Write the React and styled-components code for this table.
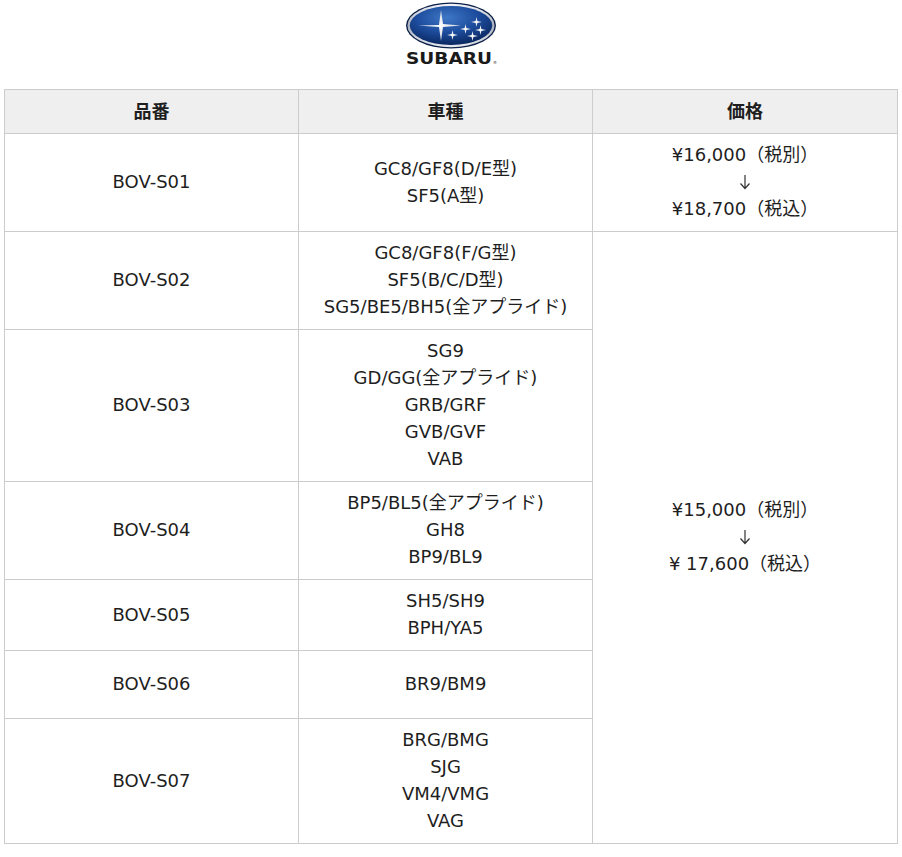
import styled, { createGlobalStyle } from 'styled-components';

const GlobalStyle = createGlobalStyle`
  body {
    margin: 0;
    background: #fff;
    font-family: "DejaVu Sans", "Noto Sans CJK JP", sans-serif;
    color: #1e1e1e;
  }
`;

const Page = styled.div`
  width: 902px;
  padding: 0 5px 0 4px;
  box-sizing: border-box;
`;

const LogoBar = styled.div`
  height: 89px;
  display: flex;
  justify-content: center;
  align-items: flex-start;
`;

const Table = styled.table`
  width: 893px;
  border-collapse: collapse;
  table-layout: fixed;
  font-size: 18px;
  line-height: 27px;
`;

const Col = styled.col`
  width: ${(p) => p.w}px;
`;

const Th = styled.th`
  background: #efefef;
  border: 1px solid #cccccc;
  height: 43px;
  padding: 0 8px;
  font-weight: bold;
  text-align: center;
  vertical-align: middle;
`;

const Row = styled.tr`
  height: ${(p) => p.h}px;
`;

const Td = styled.td`
  border: 1px solid #cccccc;
  padding: 7px 8px 9px;
  text-align: center;
  vertical-align: middle;
`;

const Line = styled.div`
  white-space: nowrap;
`;

const Arrow = styled.div`
  height: 27px;
  display: flex;
  justify-content: center;
  align-items: center;
`;

const DownArrow = () => (
  <Arrow>
    <svg width="12" height="16" viewBox="0 0 12 16">
      <path d="M6 1 V14 M1.5 9.5 L6 14.5 L10.5 9.5" fill="none" stroke="#333" strokeWidth="1.2" />
    </svg>
  </Arrow>
);

const star = (x, y, a, b, t) =>
  `M${x} ${y - a} L${x + t} ${y - t} L${x + b} ${y} L${x + t} ${y + t} L${x} ${y + a} L${x - t} ${y + t} L${x - b} ${y} L${x - t} ${y - t} Z`;

const SubaruLogo = () => (
  <svg width="100" height="70" viewBox="0 0 100 70">
    <defs>
      <radialGradient id="blue" cx="45%" cy="30%" r="70%">
        <stop offset="0" stopColor="#3f78c6" />
        <stop offset="0.55" stopColor="#1c4b9c" />
        <stop offset="1" stopColor="#0b2860" />
      </radialGradient>
      <linearGradient id="rim" x1="0" y1="0" x2="0" y2="1">
        <stop offset="0" stopColor="#f2f4f8" />
        <stop offset="0.5" stopColor="#a9b1bf" />
        <stop offset="1" stopColor="#e6e9ef" />
      </linearGradient>
      <radialGradient id="star" cx="50%" cy="50%" r="50%">
        <stop offset="0" stopColor="#ffffff" />
        <stop offset="1" stopColor="#d0d4dc" />
      </radialGradient>
    </defs>
    <ellipse cx="50" cy="25.5" rx="45" ry="23" fill="#0c1f48" />
    <ellipse cx="50" cy="25.5" rx="43.6" ry="21.7" fill="url(#rim)" />
    <ellipse cx="50" cy="25.5" rx="41.2" ry="19.6" fill="url(#blue)" />
    <path d="M38 25 L40 10 L42 24 L60 25.5 L42 27 L40 41 L38 27 L17 25.5 Z" fill="url(#star)" />
    {[
      [75.5, 22],
      [64.5, 29],
      [79.5, 30],
      [51.5, 35],
      [71.5, 36],
    ].map(([x, y], i) => (
      <path key={i} d={star(x, y, 5, 5.5, 0.9)} fill="url(#star)" />
    ))}
    <text
      x="5"
      y="64"
      fontFamily='"DejaVu Sans", sans-serif'
      fontWeight="bold"
      fontSize="15"
      fill="#1a1a1a"
      textLength="86"
      lengthAdjust="spacingAndGlyphs"
    >
      SUBARU
    </text>
    <text x="92" y="64" fontFamily='"DejaVu Sans", sans-serif' fontSize="4" fill="#1a1a1a">®</text>
  </svg>
);

const rows = [
  { id: 'BOV-S01', h: 98, cars: ['GC8/GF8(D/E型)', 'SF5(A型)'] },
  { id: 'BOV-S02', h: 98, cars: ['GC8/GF8(F/G型)', 'SF5(B/C/D型)', 'SG5/BE5/BH5(全アプライド)'] },
  { id: 'BOV-S03', h: 152, cars: ['SG9', 'GD/GG(全アプライド)', 'GRB/GRF', 'GVB/GVF', 'VAB'] },
  { id: 'BOV-S04', h: 98, cars: ['BP5/BL5(全アプライド)', 'GH8', 'BP9/BL9'] },
  { id: 'BOV-S05', h: 71, cars: ['SH5/SH9', 'BPH/YA5'] },
  { id: 'BOV-S06', h: 68, cars: ['BR9/BM9'] },
  { id: 'BOV-S07', h: 125, cars: ['BRG/BMG', 'SJG', 'VM4/VMG', 'VAG'] },
];

const prices = [
  ['¥16,000（税別）', '¥18,700（税込）'],
  ['¥15,000（税別）', '¥ 17,600（税込）'],
];

export default function App() {
  return (
    <Page>
      <GlobalStyle />
      <LogoBar>
        <SubaruLogo />
      </LogoBar>
      <Table>
        <colgroup>
          <Col w={294} />
          <Col w={294} />
          <Col w={305} />
        </colgroup>
        <thead>
          <tr>
            <Th>品番</Th>
            <Th>車種</Th>
            <Th>価格</Th>
          </tr>
        </thead>
        <tbody>
          {rows.map((r, i) => (
            <Row key={r.id} h={r.h}>
              <Td>{r.id}</Td>
              <Td>
                {r.cars.map((c) => (
                  <Line key={c}>{c}</Line>
                ))}
              </Td>
              {i < 2 && (
                <Td rowSpan={i === 0 ? 1 : 6}>
                  <Line>{prices[i][0]}</Line>
                  <DownArrow />
                  <Line>{prices[i][1]}</Line>
                </Td>
              )}
            </Row>
          ))}
        </tbody>
      </Table>
    </Page>
  );
}
